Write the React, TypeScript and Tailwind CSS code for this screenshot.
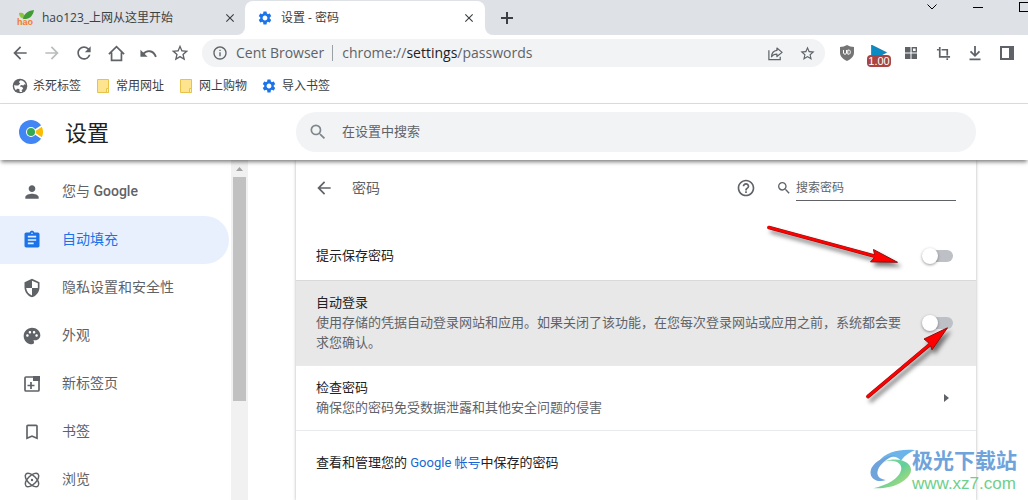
import React from 'react';
import {
  MdArrowBack,
  MdArrowForward,
  MdAssignment,
  MdBookmarkBorder,
  MdClose,
  MdHelpOutline,
  MdInfoOutline,
  MdPalette,
  MdPerson,
  MdRefresh,
  MdSearch,
  MdSettings,
  MdStarBorder,
} from 'react-icons/md';

type IconProps = { className?: string };

const HomeIcon: React.FC<IconProps> = ({ className }) => (
  <svg viewBox="0 0 20 20" className={className} fill="none" stroke="currentColor" strokeWidth="1.8">
    <path d="M2 10.6 10 2.8l8 7.8M4.8 9v8.2h10.4V9" />
  </svg>
);

const UndoIcon: React.FC<IconProps> = ({ className }) => (
  <svg viewBox="0 0 20 20" className={className} fill="none" stroke="currentColor" strokeWidth="2">
    <path d="M4 11C8 6 15 6 17.8 13.5" />
    <path d="M1.5 6v7.5H9z" fill="currentColor" stroke="none" />
  </svg>
);

const GlobeIcon: React.FC<IconProps> = ({ className }) => (
  <svg viewBox="0 0 16 16" className={className}>
    <circle cx="8" cy="8" r="7.3" fill="currentColor" />
    <path d="M8.500 2.200 6.800 4l1.400 1.600-2 1.900H3.800L2.200 7C2 9 2.700 11 4 12.300l1-1.500 2.300.2.400 3c.9.100 1.700 0 2.500-.2l-.6-1.600 1.600-1.400-1-1.700-2.400-.6L9 7l2.300.6 1.200-1.300 1.300.4C13.300 4.500 11.300 2.500 8.500 2.200z" fill="#fff" />
  </svg>
);

const ShareIcon: React.FC<IconProps> = ({ className }) => (
  <svg viewBox="0 0 18 18" className={className} fill="none" stroke="currentColor" strokeWidth="1.3">
    <path d="M2 5.5v10h12v-3" />
    <path d="M10.5 3.2 16 7.8l-5.500 4.400V9.700C8 9.700 6 10.500 4.800 12.500 5 8.500 7 6.200 10.500 5.800z" strokeLinejoin="round" />
  </svg>
);

const ShieldBadgeIcon: React.FC<IconProps> = ({ className }) => (
  <svg viewBox="0 0 16 16" className={className}>
    <path d="M8 0c2 1.300 4.500 1.900 7 2v5.500c0 4-3 6.800-7 8.500-4-1.700-7-4.500-7-8.500V2c2.500-.1 5-.7 7-2z" fill="#757575" />
    <path d="M4.500 5v3.200c0 1.300 3 1.300 3 0V5M8.800 5v4.200h1.100c1.800 0 2-4.200 0-4.200z" fill="none" stroke="#fff" />
  </svg>
);

const GridIcon: React.FC<IconProps> = ({ className }) => (
  <svg viewBox="0 0 14 14" className={className} fill="currentColor">
    <path d="M1 1h5.500v5.500H1zM1 7.500h5.500V13H1zM7.500 7.500H13V13H7.500z" />
    <path d="M8.300 1.700h4v4h-4z" fill="none" stroke="currentColor" strokeWidth="1.400" />
  </svg>
);

const CropIcon: React.FC<IconProps> = ({ className }) => (
  <svg viewBox="0 0 16 16" className={className} fill="none" stroke="currentColor" strokeWidth="1.800">
    <path d="M4 1v10.500h11M1 4h2M6 4h6v6M12 13v2" />
  </svg>
);

const DownloadIcon: React.FC<IconProps> = ({ className }) => (
  <svg viewBox="0 0 16 16" className={className} fill="none" stroke="currentColor" strokeWidth="1.800">
    <path d="M8 1v9.500M3.500 6.300 8 10.800l4.500-4.500M2.500 14.300h11" />
  </svg>
);

const SidePanelIcon: React.FC<IconProps> = ({ className }) => (
  <svg viewBox="0 0 14 14" className={className} fill="currentColor">
    <path d="M0 0h14v14H0zM2 2v10h7V2z" fillRule="evenodd" />
  </svg>
);

const HaoIcon: React.FC<IconProps> = ({ className }) => (
  <svg viewBox="0 0 17 16" className={className}>
    <path d="M2 3c4-.8 6 1 6 6C4 8.500 2 6.500 2 3z" fill="#8cc63f" />
    <path d="M6 9C7 4 10 .8 17 0c-1 6-4.500 9.500-11 9z" fill="#3f9c35" />
    <text x="0" y="15" fontSize="9" fontWeight="700" fontFamily="Liberation Sans, sans-serif" fill="#f07d2a">hao</text>
  </svg>
);

const ShieldIcon: React.FC<IconProps> = ({ className }) => (
  <svg viewBox="0 0 24 24" className={className} fill="currentColor">
    <path
      d="M12 1l9 4v6c0 5.550-3.840 10.740-9 12-5.160-1.260-9-6.450-9-12V5zM12 3.200V12H5c.53 4.120 3.280 7.790 7 8.940V12h7V6.300z"
      fillRule="evenodd"
    />
  </svg>
);

const NewTabIcon: React.FC<IconProps> = ({ className }) => (
  <svg viewBox="0 0 20 20" className={className} fill="none" stroke="currentColor" strokeWidth="1.700">
    <rect x="3" y="3" width="14" height="14" rx="1" />
    <path d="M11 2h7v5h-7z" fill="currentColor" stroke="none" />
    <path d="M9 8v7M5.500 11.500h7" />
  </svg>
);

const AtomIcon: React.FC<IconProps> = ({ className }) => (
  <svg viewBox="0 0 20 20" className={className} fill="none" stroke="currentColor" strokeWidth="1.500">
    <ellipse cx="10" cy="10" rx="8.500" ry="4.300" transform="rotate(45 10 10)" />
    <ellipse cx="10" cy="10" rx="8.500" ry="4.300" transform="rotate(-45 10 10)" />
    <circle cx="10" cy="10" r="1.200" fill="currentColor" stroke="none" />
  </svg>
);

const BrowserLogo: React.FC<IconProps> = ({ className }) => (
  <svg viewBox="0 0 24 24" className={className}>
    <circle cx="12" cy="12" r="12" fill="#4285f4" />
    <path d="M12 12 24 4v16z" fill="#fff" />
    <path d="M15 12 22.800 6.800a12 12 0 0 1 0 10.400z" fill="#fbbc05" />
    <circle cx="12" cy="12" r="5" fill="#fff" />
    <circle cx="12" cy="12" r="4" fill="#34a853" />
  </svg>
);

const FolderIcon: React.FC = () => (
  <svg viewBox="0 0 16 16" className="size-4">
    <path d="M2.500 1.500h11v13h-11z" fill="#ffe48f" stroke="#e8c34a" />
    <path d="M11.500 10.500h2v4h-2z" fill="#fff0b8" stroke="#e8c34a" />
  </svg>
);

const bookmarks = [
  { label: '杀死标签', icon: <GlobeIcon className="size-4 text-[#5f6368]" /> },
  { label: '常用网址', icon: <FolderIcon /> },
  { label: '网上购物', icon: <FolderIcon /> },
  { label: '导入书签', icon: <MdSettings className="size-4 text-[#1a73e8]" /> },
];

const navItems = [
  { label: <>您与 <span className="font-medium">Google</span></>, key: 'people', icon: MdPerson },
  { label: '自动填充', key: 'autofill', icon: MdAssignment, active: true },
  { label: '隐私设置和安全性', key: 'privacy', icon: ShieldIcon },
  { label: '外观', key: 'appearance', icon: MdPalette },
  { label: '新标签页', key: 'newtab', icon: NewTabIcon },
  { label: '书签', key: 'bookmarks', icon: MdBookmarkBorder },
  { label: '浏览', key: 'browse', icon: AtomIcon },
];

const ToolButton: React.FC<{ label: string; children: React.ReactNode }> = ({ label, children }) => (
  <button aria-label={label} className="flex h-7 w-8 shrink-0 items-center justify-center">
    {children}
  </button>
);

const Toggle: React.FC<{ id: string }> = ({ id }) => (
  <input
    id={id}
    type="checkbox"
    role="switch"
    className="relative h-3 w-7 shrink-0 appearance-none rounded-full bg-[#bdc1c6] before:absolute before:-left-[3px] before:-top-0.5 before:size-4 before:rounded-full before:bg-white before:shadow-[0_1px_3px_rgba(0,0,0,0.4)] checked:bg-[#8ab4f8] checked:before:left-4"
  />
);

const TabStrip: React.FC = () => (
  <div className="flex h-[35px] bg-white text-xs text-[#3c4043]">
    <div className="flex w-[245px] shrink-0 items-center rounded-br-lg bg-[#dee1e6] pl-[17px] pr-[7px]">
      <HaoIcon className="h-4 w-[17px]" />
      <span className="ml-2 flex-1">hao123_上网从这里开始</span>
      <button aria-label="关闭标签页" className="flex size-4 items-center justify-center">
        <MdClose className="size-[14px]" />
      </button>
    </div>
    <div className="w-60 shrink-0 bg-[#dee1e6] pt-px">
      <div className="flex h-full items-center rounded-t-lg bg-white pl-3 pr-2">
        <MdSettings className="size-4 text-[#1a73e8]" />
        <span className="ml-2 flex-1">设置 - 密码</span>
        <button aria-label="关闭标签页" className="flex size-4 items-center justify-center">
          <MdClose className="size-[14px]" />
        </button>
      </div>
    </div>
    <div className="flex flex-1 items-center overflow-hidden rounded-bl-lg bg-[#dee1e6] pl-4">
      <button aria-label="新建标签页">
        <svg viewBox="0 0 12 12" className="size-3" stroke="currentColor" strokeWidth="2">
          <path d="M6 0v12M0 6h12" />
        </svg>
      </button>
      <div className="-mr-[19px] ml-auto flex self-start text-black">
        <button aria-label="搜索标签页" className="flex h-[14px] w-[46px] items-center justify-center">
          <svg viewBox="0 0 10 6" className="h-[6px] w-[10px]" fill="none" stroke="currentColor">
            <path d="M.5.5 5 5 9.500.5" />
          </svg>
        </button>
        <button aria-label="最小化" className="flex h-[14px] w-[46px] items-center justify-center">
          <span className="h-px w-[10px] bg-black" />
        </button>
        <button aria-label="最大化" className="flex h-[14px] w-[46px] items-center justify-center">
          <span className="size-[10px] border border-black" />
        </button>
      </div>
    </div>
  </div>
);

const Toolbar: React.FC = () => (
  <div className="flex items-center py-1 pl-1 pr-[5px] text-[#5f6368]">
    <ToolButton label="后退"><MdArrowBack className="size-5" /></ToolButton>
    <ToolButton label="前进"><MdArrowForward className="size-5 text-[#babcbe]" /></ToolButton>
    <ToolButton label="重新加载"><MdRefresh className="size-5" /></ToolButton>
    <ToolButton label="主页"><HomeIcon className="size-[19px]" /></ToolButton>
    <ToolButton label="撤消"><UndoIcon className="size-[19px]" /></ToolButton>
    <ToolButton label="收藏"><MdStarBorder className="size-5" /></ToolButton>
    <div className="mx-[6px] flex h-7 flex-1 items-center rounded-full bg-[#f1f3f4] pl-[10px] pr-[2px] text-sm">
      <MdInfoOutline className="size-4" />
      <span className="ml-2">Cent Browser</span>
      <span className="ml-2 mr-[9px] h-4 w-px bg-[#9aa0a6]" />
      <span className="flex-1">
        chrome://<span className="text-[#202124]">settings</span>/passwords
      </span>
      <ToolButton label="分享"><ShareIcon className="size-[17px]" /></ToolButton>
      <ToolButton label="为此页添加书签"><MdStarBorder className="size-[17px]" /></ToolButton>
    </div>
    <ToolButton label="广告拦截"><ShieldBadgeIcon className="size-4" /></ToolButton>
    <ToolButton label="播放速度">
      <span className="relative block h-4 w-4">
        <svg viewBox="0 0 16 16" className="size-4">
          <path d="M.5 0 15.500 7.500.5 15z" fill="#0b8ac4" stroke="#0a6e9e" strokeWidth=".6" />
        </svg>
        <span className="absolute -left-1 top-[10px] h-3 w-6 rounded-sm bg-[#a94444] text-center font-['Liberation_Sans',sans-serif] text-[11px] leading-3 text-white">
          1.00
        </span>
      </span>
    </ToolButton>
    <ToolButton label="扩展程序"><GridIcon className="size-[14px]" /></ToolButton>
    <ToolButton label="截图"><CropIcon className="size-[15px]" /></ToolButton>
    <ToolButton label="下载"><DownloadIcon className="size-4" /></ToolButton>
    <ToolButton label="侧边栏"><SidePanelIcon className="size-[14px]" /></ToolButton>
  </div>
);

const Sidebar: React.FC = () => (
  <nav className="w-[231px] shrink-0 pt-2 text-sm text-[#5f6368]">
    {navItems.map(({ key, label, icon: Icon, active }) => (
      <a
        key={key}
        href={`#${key}`}
        className={
          active
            ? 'mr-[2px] flex h-12 items-center gap-5 rounded-r-full bg-[#e8f0fe] pl-[22px] text-[#1a73e8]'
            : 'mr-[2px] flex h-12 items-center gap-5 pl-[22px]'
        }
      >
        <Icon className="size-5" />
        <span className="pb-0.5">{label}</span>
      </a>
    ))}
  </nav>
);

const Scrollbar: React.FC = () => (
  <div className="flex w-[17px] shrink-0 flex-col items-center bg-[#f1f1f1]">
    <svg viewBox="0 0 17 17" className="size-[17px]">
      <path d="M8.500 7 12 11H5z" fill="#a3a3a3" />
    </svg>
    <div className="h-[66%] w-[13px] bg-[#c1c1c1]" />
  </div>
);

const PasswordCard: React.FC = () => (
  <main className="relative ml-12 mr-[52px] flex-1 bg-white text-[13px] leading-5 text-[#202124] shadow-[0_1px_3px_rgba(60,64,67,0.4)]">
    <div className="flex h-[71px] items-start px-5 pt-[18px] text-[#5f6368]">
      <button aria-label="返回" className="-ml-[2px] flex h-5 items-center">
        <MdArrowBack className="size-5" />
      </button>
      <h2 className="ml-[18px] flex-1 text-sm">密码</h2>
      <button aria-label="帮助"><MdHelpOutline className="size-5" /></button>
      <label htmlFor="search-passwords" className="ml-5 flex h-5 items-center">
        <MdSearch className="size-4" />
      </label>
      <input
        id="search-passwords"
        type="text"
        placeholder="搜索密码"
        className="ml-1 h-[23px] w-40 border-b border-[#5f6368] pb-[3px] text-xs outline-none placeholder:text-[#5f6368]"
      />
    </div>

    <div className="flex h-[49px] items-center justify-between pl-5 pr-[23px]">
      <label htmlFor="offer-save">提示保存密码</label>
      <Toggle id="offer-save" />
    </div>

    <div className="flex items-center gap-5 border-t border-[#d9d9d9] bg-[#e8e8e8] py-3 pl-5 pr-[23px]">
      <label htmlFor="auto-signin" className="flex-1">
        自动登录
        <span className="block text-[#5f6368]">
          使用存储的凭据自动登录网站和应用。如果关闭了该功能，在您每次登录网站或应用之前，系统都会要求您确认。
        </span>
      </label>
      <Toggle id="auto-signin" />
    </div>

    <button className="flex w-full items-center border-t border-[#e8eaed] py-3 pl-5 pr-[23px] text-left">
      <span className="flex-1">
        检查密码
        <span className="block text-[#5f6368]">确保您的密码免受数据泄露和其他安全问题的侵害</span>
      </span>
      <svg viewBox="0 0 14 14" className="size-[14px]">
        <path d="M5 3v8l5-4z" fill="#5f6368" />
      </svg>
    </button>

    <p className="border-t border-[#e8eaed] px-5 py-[22px]">
      查看和管理您的 <a href="#account" className="text-[#1967d2]">Google 帐号</a>中保存的密码
    </p>

    {/* Pointers to the two switches */}
    <svg
      viewBox="0 0 150 60"
      className="pointer-events-none absolute right-[68px] top-[60px] h-[60px] w-[150px] drop-shadow-[3px_4px_2px_rgba(0,0,0,0.5)]"
    >
      <path d="M11 7.500 118 36.500" stroke="#8a1010" strokeWidth="3.600" strokeLinecap="round" />
      <path d="M115.500 29.500 139.500 42.300 112.500 41.800 117 37z" fill="#f00" stroke="#8a1010" strokeWidth="1" strokeLinejoin="round" />
      <path d="M11 7.500 120 37" stroke="#f00" strokeWidth="2.800" strokeLinecap="round" />
    </svg>
    <svg
      viewBox="0 0 100 90"
      className="pointer-events-none absolute right-[16px] top-[160px] h-[90px] w-[100px] drop-shadow-[3px_4px_2px_rgba(0,0,0,0.5)]"
    >
      <path d="M8 76.500 70 24.500" stroke="#8a1010" strokeWidth="3.600" strokeLinecap="round" />
      <path d="M64 19 87.500 7.800 72 29.800 70 24z" fill="#f00" stroke="#8a1010" strokeWidth="1" strokeLinejoin="round" />
      <path d="M8 76.500 72 22.500" stroke="#f00" strokeWidth="2.800" strokeLinecap="round" />
    </svg>
  </main>
);

const Watermark: React.FC = () => (
  <div className="pointer-events-none absolute bottom-1 right-[11px] flex items-start">
    <svg viewBox="52 58 142 126" className="h-[42px] w-[47px]">
      <defs>
        <linearGradient id="sweep" x1="0" y1="0" x2="1" y2="1">
          <stop offset="0" stopColor="#8fdc9c" />
          <stop offset="0.5" stopColor="#63cf9a" />
          <stop offset="1" stopColor="#c8e06c" />
        </linearGradient>
      </defs>
      <path d="M80 100C102 68 148 60 191 64 170 72 155 84 148 98 140 78 112 80 80 100z" fill="#6cb4ea" />
      <path d="M132 79C84 86 54 110 57 136c3 20 28 26 46 18-20-2-30-14-24-30 6-17 26-34 53-45z" fill="#6ea3dc" />
      <path d="M96 99c34-10 58 4 53 25-6 26-42 46-84 55 54 4 102-18 113-48 9-27-34-50-82-32z" fill="url(#sweep)" />
    </svg>
    <div className="-ml-1">
      <div className="text-[21px] font-bold leading-6 text-[#6ea3dc]">极光下载站</div>
      <div className="font-['Liberation_Sans',sans-serif] text-[17px] leading-6 text-[#6fcf8b]">www.xz7.com</div>
    </div>
  </div>
);

const App: React.FC = () => {
  return (
    <div className="relative flex h-screen flex-col overflow-hidden bg-white font-['Open_Sans','Noto_Sans_CJK_SC',sans-serif]">
      <TabStrip />
      <Toolbar />

      {/* Bookmarks bar */}
      <div className="flex h-[33px] gap-[14px] border-b border-[#dadce0] pl-3 text-xs text-[#3c4043]">
        {bookmarks.map((b) => (
          <a key={b.label} href="#" className="flex h-[29px] items-center gap-[5px]">
            {b.icon}
            {b.label}
          </a>
        ))}
      </div>

      {/* Settings header */}
      <header className="relative z-10 flex h-14 shrink-0 items-center bg-white shadow-[0_3px_4px_-1px_rgba(0,0,0,0.5)]">
        <div className="flex w-[296px] shrink-0 items-center pl-[19px]">
          <BrowserLogo className="size-6" />
          <h1 className="ml-[22px] text-[22px] text-[#202124]">设置</h1>
        </div>
        <div className="mr-[52px] flex h-10 flex-1 items-center rounded-full bg-[#f1f3f4] pl-3">
          <label htmlFor="search-settings">
            <MdSearch className="size-5 text-[#80868b]" />
          </label>
          <input
            id="search-settings"
            type="text"
            placeholder="在设置中搜索"
            className="ml-[14px] flex-1 bg-transparent text-[13px] outline-none placeholder:text-[#5f6368]"
          />
        </div>
      </header>

      <div className="flex min-h-0 flex-1 font-[Roboto,'Noto_Sans_CJK_SC',sans-serif]">
        <Sidebar />
        <Scrollbar />
        <PasswordCard />
      </div>

      <Watermark />
    </div>
  );
};

export default App;
